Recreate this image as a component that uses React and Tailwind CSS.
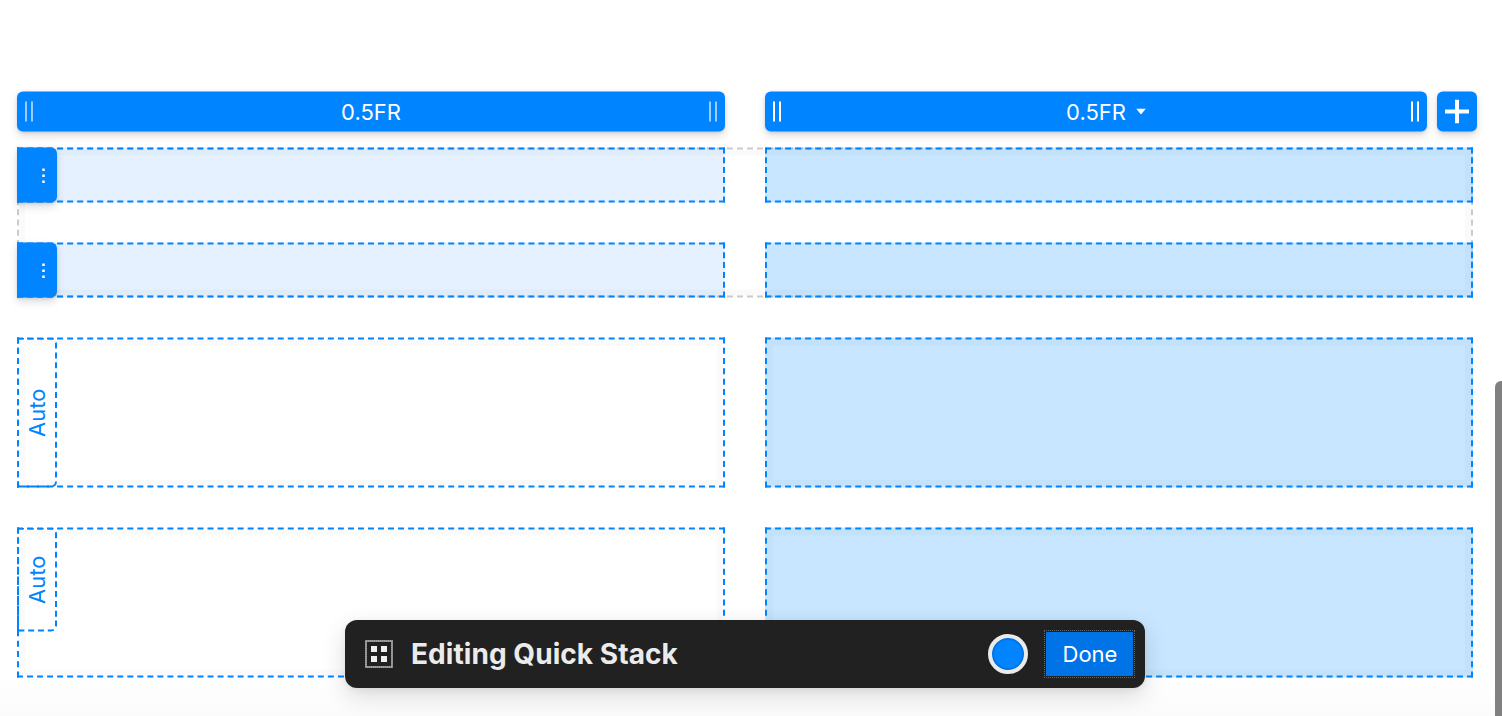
import React from "react";
import clsx from "clsx";

const CELLS = [
  { key: "a1", place: "col-start-1 row-start-1", fill: "bg-[#e5f1ff]" },
  { key: "b1", place: "col-start-2 row-start-1", fill: "bg-[#c8e6ff]" },
  { key: "a2", place: "col-start-1 row-start-2", fill: "bg-[#e5f1ff]" },
  { key: "b2", place: "col-start-2 row-start-2", fill: "bg-[#c8e6ff]" },
  { key: "a3", place: "col-start-1 row-start-3", inset: true },
  { key: "b3", place: "col-start-2 row-start-3", fill: "bg-[#c8e6ff]", inset: true },
  { key: "a4", place: "col-start-1 row-start-4", inset: true },
  { key: "b4", place: "col-start-2 row-start-4", fill: "bg-[#c8e6ff]", inset: true },
];

const SHADOW = "shadow-[0_4px_8px_rgba(0,0,0,0.13),0_1px_3px_rgba(0,0,0,0.1)]";

function Grip({ dim }) {
  return (
    <div className={clsx("flex gap-1", dim && "opacity-60")}>
      <span className="h-5 w-0.5 bg-white" />
      <span className="h-5 w-0.5 bg-white" />
    </div>
  );
}

function ColumnHeader({ width, dim, menu }) {
  return (
    <div
      className={clsx(
        "flex h-10 items-center justify-between rounded-[6px] bg-[#0084ff] px-2 text-white",
        SHADOW,
        width,
      )}
    >
      <Grip dim={dim} />
      <div
        className={clsx(
          "flex items-center gap-[10px] text-[22px] leading-10",
          menu && "pl-5",
        )}
      >
        <span>0.5FR</span>
        {menu && (
          <svg width="10" height="6" viewBox="0 0 10 6" fill="currentColor">
            <path d="M0 0H10L5 6Z" />
          </svg>
        )}
      </div>
      <Grip dim={dim} />
    </div>
  );
}

function RowHandle({ place }) {
  return (
    <div
      className={clsx(
        "flex w-10 items-center justify-end rounded-r-[6px] bg-[#0084ff] pr-3",
        SHADOW,
        place,
      )}
    >
      <svg width="3" height="16" viewBox="0 0 3 16" fill="white">
        <path d="M.25 1h2.5v2.5H.25zM.25 7h2.5v2.5H.25zM.25 13h2.5v2.5H.25z" />
      </svg>
    </div>
  );
}

function AutoTab({ place }) {
  return (
    <div
      className={clsx(
        "flex w-10 items-center justify-center rounded-r-[6px] border-2 border-dashed border-[#0084ff]",
        place,
      )}
    >
      <span className="rotate-180 text-[22px] leading-6 text-[#0084ff] [writing-mode:vertical-rl]">
        Auto
      </span>
    </div>
  );
}

function Toolbar() {
  return (
    <div className="absolute top-[620px] left-[345px] flex h-[68px] w-[800px] items-center rounded-xl bg-[#212121] pr-[10px] pl-5 shadow-[0_8px_24px_rgba(0,0,0,0.14),0_2px_6px_rgba(0,0,0,0.06)]">
      <svg width="28" height="28" viewBox="0 0 28 28" fill="none">
        <rect x="1" y="1" width="26" height="26" stroke="#8a8a8a" strokeWidth="2" />
        <rect x="1" y="1" width="26" height="26" stroke="#b5b5b5" strokeDasharray="1 1" />
        <path d="M6 6h6v6H6zM16 6h6v6h-6zM6 16h6v6H6zM16 16h6v6h-6z" fill="#f0f0f0" />
      </svg>
      <h1 className="ml-[18px] text-[28px] leading-8 font-bold tracking-[0.06px] text-[#ebebeb]">
        Editing Quick Stack
      </h1>
      <div className="ml-auto size-10 rounded-full border-4 border-[#ebebeb] bg-[#0084ff] shadow-[inset_0_0_0_2px_#0073e6]" />
      <button className="ml-4 flex h-12 w-[91px] border border-dotted border-[#666] p-px text-[22px] text-white">
        <span className="flex h-full w-full items-center justify-center rounded-[1px] bg-[#0073e6] pl-px">
          Done
        </span>
      </button>
    </div>
  );
}

export default function App() {
  return (
    <div className="relative h-[716px] w-[1502px] overflow-hidden bg-white font-['Inter',sans-serif]">
      <div className="absolute inset-x-0 bottom-0 h-10 bg-linear-to-b from-white to-[#fbfbfb]" />

      <main className="flex -translate-y-[0.5px] flex-col gap-4 pt-[92px] pl-[17px]">
        <div className="flex">
          <ColumnHeader width="w-[708px]" dim />
          <div className="ml-10 flex gap-[10px]">
            <ColumnHeader width="w-[662px]" menu />
            <button
              aria-label="Add column"
              className={clsx(
                "flex size-10 items-center justify-center rounded-[6px] bg-[#0084ff]",
                SHADOW,
              )}
            >
              <svg width="24" height="24" viewBox="0 0 24 24" fill="white">
                <path d="M10 0h4v10h10v4H14v10h-4V14H0v-4h10z" />
              </svg>
            </button>
          </div>
        </div>

        <div className="grid grid-cols-[708px_708px] grid-rows-[55px_55px_150px_150px] gap-10">
          {CELLS.map(({ key, place, fill }) => (
            <div key={key} className={clsx(place, fill)} />
          ))}

          {/* outline of the child spanning the first two rows */}
          <div className="col-span-2 col-start-1 row-span-2 row-start-1 border-2 border-dashed border-black/20 shadow-[inset_0_0_0_6px_rgba(0,0,0,0.02)]" />

          {/* cell borders stay above the child outline */}
          {CELLS.map(({ key, place, inset }) => (
            <div
              key={key}
              className={clsx(
                "border-2 border-dashed border-[#0084ff]",
                inset && "shadow-[inset_0_0_0_6px_rgba(0,0,0,0.02)]",
                place,
              )}
            />
          ))}

          <RowHandle place="col-start-1 row-start-1" />
          <RowHandle place="col-start-1 row-start-2" />
          <AutoTab place="col-start-1 row-start-3" />
          <AutoTab place="col-start-1 row-start-4 h-[104px]" />
        </div>
      </main>

      <Toolbar />
      <div className="absolute top-[381px] right-0 bottom-0 w-[7px] rounded-tl-[6px] bg-[#808080]" />
    </div>
  );
}
